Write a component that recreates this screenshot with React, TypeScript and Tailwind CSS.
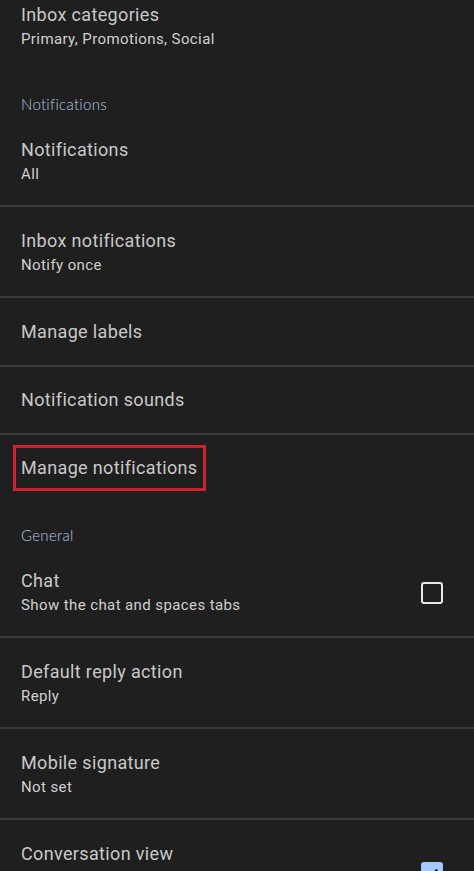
type SettingRowProps = {
  title: string;
  subtitle?: string;
  checkbox?: 'on' | 'off';
  divider?: boolean;
  highlight?: boolean;
  className?: string;
};

// Single settings entry: title, optional summary line, optional trailing checkbox
function SettingRow({ title, subtitle, checkbox, divider = true, highlight = false, className = '' }: SettingRowProps) {
  return (
    <>
      <div className={`flex items-center pl-[21px] pr-[31px] ${className}`}>
        <div className="flex-1 min-w-0">
          <div className="text-[18px] leading-6 tracking-[0.35px] text-[#c9c9c9]">
            {highlight ? (
              <span className="relative inline-block">
                {title}
                <span className="absolute -left-2 -right-[9px] -top-[11px] -bottom-[11px] border-[3px] border-[#cf2230]" />
              </span>
            ) : (
              title
            )}
          </div>
          {subtitle && <div className="text-[15px] leading-6 tracking-[0.4px] text-[#d0d0d0]">{subtitle}</div>}
        </div>
        {checkbox === 'off' && (
          <div className="ml-6 h-[22px] w-[22px] shrink-0 rounded-[3px] border-2 border-[#e6e6e6]" />
        )}
        {checkbox === 'on' && (
          <div className="ml-6 -mt-[10px] flex h-[22px] w-[22px] shrink-0 items-center justify-center rounded-[3px] bg-[#a8c7fa]">
            <svg viewBox="0 0 24 24" className="h-[18px] w-[18px]" fill="none" stroke="#0b1f3a" strokeWidth="3">
              <path d="M5 12.5l4.5 4.5L19 7.5" />
            </svg>
          </div>
        )}
      </div>
      {divider && <div className="h-[2px] bg-[#393939]" />}
    </>
  );
}

function SectionHeader({ label }: { label: string }) {
  return (
    <div className="pl-[21px] pt-6 pb-[2px] text-[15px] leading-5 font-light tracking-[0.3px] text-[#b3c5e4] [font-family:Lato,'Noto_Sans',sans-serif]">
      {label}
    </div>
  );
}

export default function App() {
  return (
    <div className="h-[871px] w-[474px] overflow-hidden bg-[#1f1f1f] [font-family:Roboto,'Liberation_Sans',sans-serif]">
      <SettingRow title="Inbox categories" subtitle="Primary, Promotions, Social" divider={false} className="pt-[3px] pb-[19px]" />

      <SectionHeader label="Notifications" />
      <SettingRow title="Notifications" subtitle="All" className="pt-[22px] pb-[19px]" />
      <SettingRow title="Inbox notifications" subtitle="Notify once" className="pt-[22px] pb-[19px]" />
      <SettingRow title="Manage labels" className="pt-[22px] pb-[21px]" />
      <SettingRow title="Notification sounds" className="pt-[21px] pb-[21px]" />
      <SettingRow title="Manage notifications" highlight divider={false} className="pt-[21px] pb-[21px]" />

      <SectionHeader label="General" />
      <SettingRow title="Chat" subtitle="Show the chat and spaces tabs" checkbox="off" className="pt-[22px] pb-[19px]" />
      <SettingRow title="Default reply action" subtitle="Reply" className="pt-[22px] pb-[19px]" />
      <SettingRow title="Mobile signature" subtitle="Not set" className="pt-[22px] pb-[19px]" />
      <SettingRow
        title="Conversation view"
        subtitle="Group emails in the same conversation for IMAP, POP3 and Exchange accounts"
        checkbox="on"
        className="pt-[22px] pb-[19px]"
      />
    </div>
  );
}
